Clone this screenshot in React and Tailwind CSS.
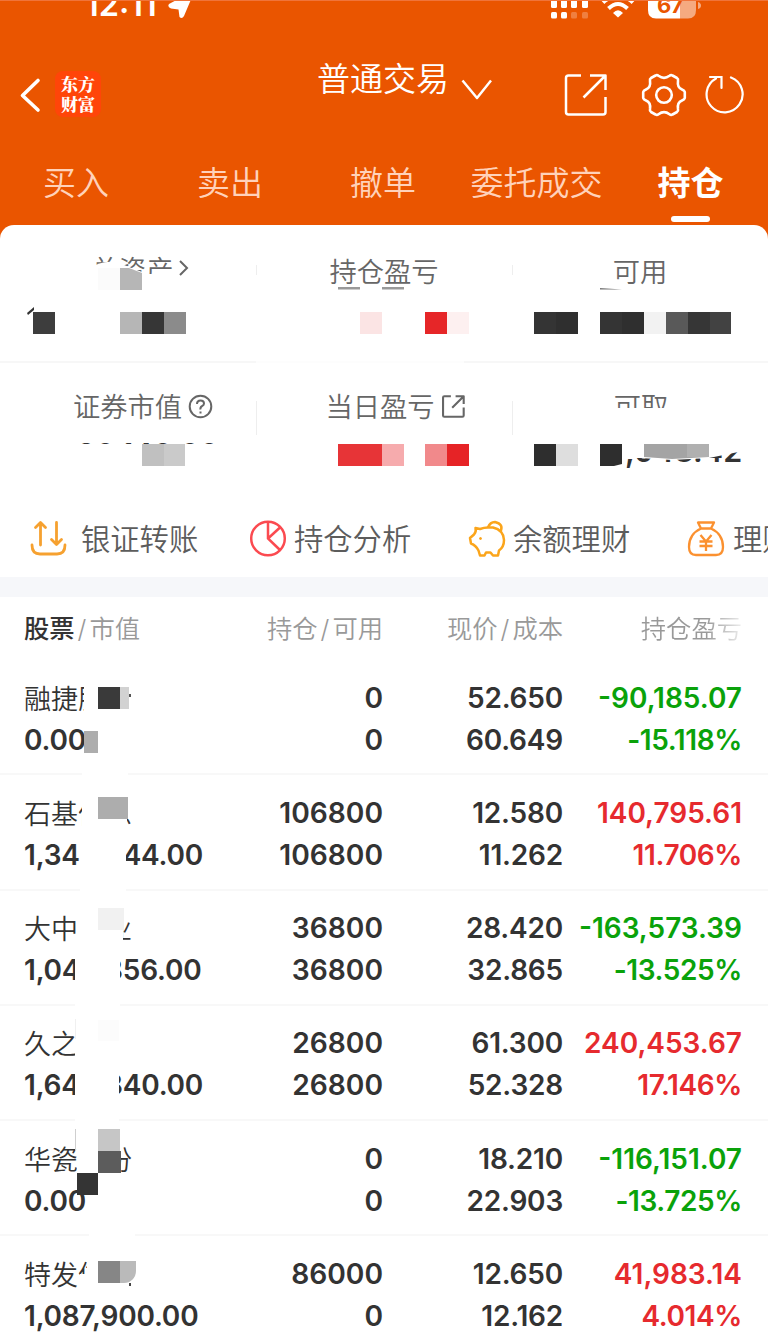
import React from "react";

const tabs = [
  { name: "买入", width: "w-[152px]" },
  { name: "卖出", width: "w-[156px]" },
  { name: "撤单", width: "w-[150px]" },
  { name: "委托成交", width: "w-[157px]" },
  { name: "持仓", width: "w-[151px]", active: true },
];

// covers are the mosaic blocks laid over the private parts of a row
const stocks = [
  {
    name: "融捷股份",
    value: "0.00",
    held: "0",
    usable: "0",
    price: "52.650",
    cost: "60.649",
    profit: "-90,185.07",
    rate: "-15.118%",
    covers: [
      "left-[84px] top-[14px] w-[50px] h-[48px] bg-white",
      "left-[129px] top-[34px] w-[2px] h-[3px] bg-[#555]",
      "left-[98px] top-[27px] w-[22px] h-[22px] bg-[#3a3a3a]",
      "left-[120px] top-[27px] w-[9px] h-[22px] bg-[#d2d2d2]",
      "left-[84px] top-[71px] w-[14px] h-[22px] bg-[#adadad]",
      "left-[82px] top-[112px] w-[46px] h-[6px] bg-white",
    ],
  },
  {
    name: "石基信息",
    value: "1,343,544.00",
    held: "106800",
    usable: "106800",
    price: "12.580",
    cost: "11.262",
    profit: "140,795.61",
    rate: "11.706%",
    covers: [
      "left-[82px] top-[10px] w-[45px] h-[52px] bg-white",
      "left-[127px] top-[10px] w-[10px] h-[34px] bg-white",
      "left-[80px] top-[60px] w-[46px] h-[58px] bg-white",
      "left-[98px] top-[22px] w-[30px] h-[22px] bg-[#adadad]",
    ],
  },
  {
    name: "大中矿业",
    value: "1,045,856.00",
    held: "36800",
    usable: "36800",
    price: "28.420",
    cost: "32.865",
    profit: "-163,573.39",
    rate: "-13.525%",
    covers: [
      "left-[77px] top-[6px] w-[46px] h-[54px] bg-white",
      "left-[123px] top-[6px] w-[10px] h-[24px] bg-white",
      "left-[75px] top-[58px] w-[45px] h-[60px] bg-white",
      "left-[98px] top-[17px] w-[26px] h-[22px] bg-[#f1f1f1]",
    ],
  },
  {
    name: "久之",
    value: "1,642,840.00",
    held: "26800",
    usable: "26800",
    price: "61.300",
    cost: "52.328",
    profit: "240,453.67",
    rate: "17.146%",
    covers: [
      "left-[75px] top-[6px] w-[44px] h-[112px] bg-white",
      "left-[75px] top-[13px] w-px h-[20px] bg-[#f0f0f0]",
      "left-[98px] top-[14px] w-[21px] h-[21px] bg-[#fcfcfc]",
    ],
  },
  {
    name: "华瓷股份",
    value: "0.00",
    held: "0",
    usable: "0",
    price: "18.210",
    cost: "22.903",
    profit: "-116,151.07",
    rate: "-13.725%",
    covers: [
      "left-[77px] top-[8px] w-[44px] h-[48px] bg-white",
      "left-[75px] top-[8px] w-px h-[22px] bg-[#cfcfcf]",
      "left-[98px] top-[8px] w-[22px] h-[22px] bg-[#c6c6c6]",
      "left-[98px] top-[30px] w-[23px] h-[22px] bg-[#5c5c5c]",
      "left-[77px] top-[52px] w-[21px] h-[22px] bg-[#343434]",
      "left-[89px] top-[111px] w-[46px] h-[6px] bg-white",
    ],
  },
  {
    name: "特发信息",
    value: "1,087,900.00",
    held: "86000",
    usable: "0",
    price: "12.650",
    cost: "12.162",
    profit: "41,983.14",
    rate: "4.014%",
    covers: [
      "left-[87px] top-[12px] w-[50px] h-[42px] bg-white",
      "left-[80px] top-[38px] w-[10px] h-[16px] bg-white",
      "left-[129px] top-[47px] w-[2px] h-[3px] bg-[#444]",
      "left-[98px] top-[25px] w-[22px] h-[22px] bg-[#868686]",
      "left-[120px] top-[25px] w-[16px] h-[22px] rounded-br-[12px] bg-[#bababa]",
    ],
  },
];

const ShareIcon = ({ className, stroke }) => (
  <svg viewBox="0 0 44 44" className={className} fill="none" stroke="currentColor" strokeWidth={stroke} strokeLinejoin="round">
    <path d="M17 2.500H4.500Q2 2.500 2 5V39Q2 41.500 4.500 41.500H39Q41.500 41.500 41.500 39V24" />
    <path d="M26 2.500H41.500V17M41 3L19.500 24.500" />
  </svg>
);

const StatusBar = () => (
  <div className="relative h-[24px] overflow-hidden border-t border-[#f0743a]">
    <span className="absolute left-[85px] -top-[14px] text-[32.500px] leading-[36px] font-semibold">
      12:11
    </span>
    <svg className="absolute left-0 -top-px" width="768" height="24" fill="#fff">
      <path d="M195 -10L184 16Q182 19.500 179.500 17L178.500 9.500L171 8.500Q167 7 169 4Z" />
      <rect x="551" y="0" width="6" height="8" rx="1.500" />
      <rect x="561" y="-2" width="6" height="10" rx="1.500" />
      <rect x="571" y="-4" width="6" height="12" rx="1.500" />
      <rect x="582" y="-4" width="6" height="12" rx="1.500" />
      <rect x="551" y="12" width="6" height="6.500" rx="1.500" />
      <rect x="561" y="12" width="6" height="6.500" rx="1.500" />
      <rect x="571" y="12" width="6" height="6.500" rx="1.500" opacity=".25" />
      <rect x="582" y="12" width="6" height="6.500" rx="1.500" opacity=".25" />
      <path d="M613 13Q618 7.500 623 13L618 17.500Z" />
      <path d="M608.500 8.500Q618 -.5 627.500 8.500" fill="none" stroke="#fff" strokeWidth="4" />
      <path d="M603 2.500Q618 -11 633 2.500" fill="none" stroke="#fff" strokeWidth="4" />
      <path d="M656 -8H680V18.500H656Q648 18.500 648 10V-8Z" />
      <path d="M680 -8H696V10Q696 18.500 688 18.500H680Z" opacity=".5" />
      <path d="M698 2Q701 3 701 5.500T698 9Z" opacity=".5" />
    </svg>
    <span className="absolute left-[657px] -top-[9px] text-[22px] leading-[26px] font-bold tracking-[-0.5px] text-[#ea5500]">
      67
    </span>
  </div>
);

const NavBar = () => (
  <div className="flex h-[136px] items-center">
    <svg className="ml-[18px] mt-[5px] shrink-0" width="26" height="36" fill="none" stroke="#fff" strokeWidth="3.600" strokeLinecap="round" strokeLinejoin="round">
      <path d="M20 3.500L4.500 18.500L20 33" />
    </svg>
    <div className="ml-[11px] mt-[4px] h-[46px] w-[46px] shrink-0 rounded-[8px] bg-[#ff4509] pt-[3px] text-center font-['Noto_Serif_CJK_SC','Noto_Sans_CJK_SC',serif] text-[17px] leading-[19.500px] font-black">
      东方
      <br />
      财富
    </div>
    <h1 className="-mt-[26px] ml-[216px] w-[132px] whitespace-nowrap text-[33px] leading-[40px] font-[350]">
      普通交易
    </h1>
    <svg className="-mt-[4px] ml-[12px] shrink-0" width="32" height="22" fill="none" stroke="#fff" strokeWidth="2.500" strokeLinejoin="round">
      <path d="M1.500 1.500L16 19L30 1.500" />
    </svg>
    <ShareIcon className="ml-[71px] mt-[6px] h-[44px] w-[44px] shrink-0" stroke={2.5} />
    <svg className="ml-[33px] mt-[5px] shrink-0" width="46" height="46" viewBox="0 0 46 46" fill="none" stroke="#fff" strokeWidth="2.600" strokeLinejoin="round">
      <path d="M14.500 3.500Q16 2.500 17.500 3.800Q23 8 28.500 3.800Q30 2.500 31.500 3.500L36 6Q37.500 7 37 9Q36 15.500 41 17.500Q43.500 18.500 43.800 20V26Q43.500 27.500 41 28.500Q36 30.500 37 37Q37.500 39 36 40L31.500 42.500Q30 43.500 28.500 42.200Q23 38 17.500 42.200Q16 43.500 14.500 42.500L10 40Q8.500 39 9 37Q10 30.500 5 28.500Q2.500 27.500 2.200 26V20Q2.500 18.500 5 17.500Q10 15.500 9 9Q8.500 7 10 6Z" />
      <circle cx="23" cy="23" r="7.800" />
    </svg>
    <svg className="ml-[18px] mt-[4px] shrink-0" width="42" height="42" fill="none" stroke="#fff" strokeWidth="2.200" strokeLinecap="round">
      <path d="M26 4.500A18 18 0 1 1 11 5.500M5 4H16.500V15" />
    </svg>
  </div>
);

const Tabs = () => (
  <div className="flex h-[65px] pt-px">
    {tabs.map((tab) => (
      <div
        key={tab.name}
        className={`${tab.width} flex shrink-0 flex-col items-center whitespace-nowrap text-[33px] leading-[44px] ${
          tab.active ? "font-bold text-white" : "font-[350] text-[#ffd2ba]"
        }`}
      >
        {tab.name}
        {tab.active && <i className="mt-[11px] h-[6px] w-[39px] rounded-full bg-white" />}
      </div>
    ))}
  </div>
);

const Summary = () => (
  <div className="text-[27.300px] leading-[36px] font-[350] text-[#666]">
    <div className="relative grid h-[138px] grid-cols-3 border-b-2 border-[#f7f7f7] pt-[30px]">
      <div className="-mt-[2px] flex h-[30px] justify-center gap-[5px] overflow-hidden pl-[26px]">
        <span className="h-[21px] overflow-hidden">总资产</span>
        <svg className="mt-[6px]" width="12" height="18" fill="none" stroke="#666" strokeWidth="2">
          <path d="M2 2L9 9L2 16" />
        </svg>
      </div>
      <div className="text-center">持仓盈亏</div>
      <div className="text-center">可用</div>
      <i className="absolute left-[256px] top-[40px] h-[10px] w-px bg-[#eee]" />
      <i className="absolute left-[512px] top-[40px] h-[10px] w-px bg-[#eee]" />
      {/* Redacted labels and amounts */}
      <svg className="absolute left-0 top-0" width="768" height="138">
        <path d="M88 44Q104 34 119 38L142 47Q143 50 143 50V72H88Z" fill="#fff" />
        <path d="M98 43H120V65H98Z" fill="#fbfbfb" />
        <path d="M120 43H129L142 48V65H120Z" fill="#b6b6b6" />
        <path d="M27 88L34 82V85L28 90Z" fill="#333" />
        <path d="M33 87H55V109H33Z" fill="#3d3d3d" />
        <path d="M120 87H142V109H120Z" fill="#b6b6b6" />
        <path d="M142 87H164V109H142Z" fill="#363636" />
        <path d="M164 87H186V109H164Z" fill="#8b8b8b" />
        <path d="M338 62H360V64.500H338ZM382 62H404V64.500H382Z" fill="#999" />
        <path d="M360 87H382V109H360Z" fill="#fbe4e4" />
        <path d="M425 87H447V109H425Z" fill="#e62628" />
        <path d="M447 87H469V109H447Z" fill="#fdf0f0" />
        <path d="M600 63L622 64.500H600Z" fill="#777" />
        <path d="M534 87H556V109H534ZM600 87H622V109H600Z" fill="#343434" />
        <path d="M556 87H578V109H556ZM622 87H644V109H622Z" fill="#2f2f2f" />
        <path d="M644 87H666V109H644Z" fill="#f2f2f2" />
        <path d="M666 87H688V109H666Z" fill="#595959" />
        <path d="M688 87H710V109H688Z" fill="#363636" />
        <path d="M710 87H731V109H710Z" fill="#424242" />
      </svg>
      <i className="absolute left-[256px] -bottom-[2px] h-[2px] w-[208px] bg-[#fdfdfd]" />
    </div>

    <div className="relative grid h-[132px] grid-cols-3 pt-[27px]">
      <div className="flex justify-center gap-[6px] pl-[30px]">
        <span>证券市值</span>
        <svg className="mt-[4px]" width="25" height="25" fill="none" stroke="#666" strokeWidth="2">
          <circle cx="12.500" cy="12.500" r="10.800" />
          <path d="M9 10Q9 6.500 12.500 6.500T16 9.500Q16 11 14 12.200T12.500 15.500M12.500 17.500V19.500" />
        </svg>
      </div>
      <div className="flex justify-center gap-[7px] pl-[22px]">
        <span>当日盈亏</span>
        <ShareIcon className="mt-[5px] h-[23px] w-[23px]" stroke={4} />
      </div>
      <div className="h-[18px] overflow-hidden pl-[2px] text-center">可取</div>
      <i className="absolute left-[256px] top-[38px] h-[34px] w-px bg-[#eee]" />
      <i className="absolute left-[512px] top-[38px] h-[34px] w-px bg-[#eee]" />
      <div className="absolute left-[77px] top-[76px] h-[5px] overflow-hidden">
        <div className="-mt-[3px] text-[29.500px] leading-[36px] font-semibold text-[#333]">20,140.00</div>
      </div>
      <div className="absolute left-[625px] top-[83px] h-[26px] overflow-hidden">
        <div className="-mt-[12px] text-[30.500px] leading-[34px] font-semibold text-[#333]">,948.42</div>
      </div>
      <svg className="absolute left-0 top-0" width="768" height="132">
        <path d="M622 79H748V87L709 95L672 97L640 95H622Z" fill="#fff" />
        <path d="M142 81H164V103H142Z" fill="#c0c0c0" />
        <path d="M164 81H185V103H164Z" fill="#cacaca" />
        <path d="M338 81H382V103H338Z" fill="#e73437" />
        <path d="M382 81H404V103H382Z" fill="#f6abad" />
        <path d="M425 81H447V103H425Z" fill="#f1898b" />
        <path d="M447 81H469V103H447Z" fill="#e62326" />
        <path d="M534 81H556V103H534ZM600 81H622V101L614 103H600Z" fill="#2e2e2e" />
        <path d="M556 81H578V103H556Z" fill="#dedede" />
        <path d="M644 81H709V94L672 96L644 94Z" fill="#a4a4a4" />
        <path d="M687 81H709V94H687Z" fill="#b0b0b0" />
      </svg>
    </div>
  </div>
);

const Shortcuts = () => (
  <div className="flex h-[82px] items-center overflow-hidden whitespace-nowrap pl-[29px] pt-[5px] text-[29.300px] font-[350] text-[#5c5c5c]">
    <div className="flex w-[220px] shrink-0 items-center gap-[14px]">
      <svg width="38" height="38" fill="none" stroke="#f6a130" strokeWidth="2.800" strokeLinecap="round" strokeLinejoin="round">
        <path d="M11.500 25V3M6.500 7.500L11.500 2.500L16.500 7.500M27.500 2.500V24M22.500 19.500L27.500 24.500L32.500 19.500M3 25Q3 34 11 34H28Q36 34 36 25" />
      </svg>
      <span className="pt-[2px]">银证转账</span>
    </div>
    <div className="flex w-[219px] shrink-0 items-center gap-[7px]">
      <svg width="38" height="38" fill="none" stroke="#fb4a50" strokeWidth="2.500">
        <circle cx="19" cy="18.500" r="16.800" />
        <path d="M19 2V18.500L31 30M19 18.500L31 7.500" />
      </svg>
      <span className="pt-[2px]">持仓分析</span>
    </div>
    <div className="flex w-[219px] shrink-0 items-center gap-[7px]">
      <svg width="38" height="38" fill="none" stroke="#fba51b" strokeWidth="2.500" strokeLinejoin="round">
        <path d="M7.500 8L12 9Q16 7.500 20 7.500H25Q35.500 10 36 20Q36 27 31 30.500L30 35.500H25L22.500 32.500H18L16.500 35.500H12L10.500 30.500Q8 25.500 3 23.500L2 18L6 14.500Q8.500 11.500 7.500 8Z" />
        <path d="M20 7.500Q22 2 27 2Q36 4 32.500 11.500" />
        <circle cx="12.500" cy="18.500" r="1" fill="#fba51b" strokeWidth="1" />
      </svg>
      <span className="pt-[2px]">余额理财</span>
    </div>
    <div className="flex shrink-0 items-center gap-[8px]">
      <svg width="38" height="38" fill="none" stroke="#fb9130" strokeWidth="2.300" strokeLinejoin="round">
        <path d="M11 2.500H27L24 8.500H14ZM14 8.500Q2 14 2 27Q2 35 9 35H29Q36 35 36 27Q36 14 24 8.500" />
        <path d="M13.500 15L19 21.500L24.500 15M12.500 21.500H25.500M12.500 26H25.500M19 21.500V31" />
      </svg>
      <span className="pt-[2px]">理财</span>
    </div>
  </div>
);

const StockRow = ({ stock }) => (
  <div className="relative grid h-[115.300px] grid-cols-[200px_159px_180px_179px] border-b-2 border-[#f8f8f8] pl-6 pt-[16.500px] text-[28px] leading-[42px] font-semibold text-[#333]">
    <div className="whitespace-nowrap">
      <div className="-mb-[2px] pt-[2px] text-[27px] font-[350]">{stock.name}</div>
      <div className="tracking-[-0.2px]">{stock.value}</div>
    </div>
    <div className="text-right text-[28.200px]">
      <div>{stock.held}</div>
      <div>{stock.usable}</div>
    </div>
    <div className="text-right tracking-[-0.2px]">
      <div>{stock.price}</div>
      <div>{stock.cost}</div>
    </div>
    <div className={`text-right ${stock.profit.startsWith("-") ? "text-[#0aa20a]" : "text-[#e62a2e]"}`}>
      <div>{stock.profit}</div>
      <div className="tracking-[-0.4px]">{stock.rate}</div>
    </div>
    {stock.covers.map((cover) => (
      <i key={cover} className={`absolute ${cover}`} />
    ))}
  </div>
);

const App = () => {
  return (
    <div className="h-[1339px] w-[768px] overflow-hidden bg-[#ea5500] font-['Inter','Noto_Sans_CJK_SC',sans-serif]">
      <header className="text-white">
        <StatusBar />
        <NavBar />
        <Tabs />
      </header>

      <main className="h-[1114px] overflow-hidden rounded-t-[14px] bg-white">
        <Summary />
        <Shortcuts />
        <div className="h-5 bg-[#f6f7fa]" />

        {/* Positions */}
        <div className="grid h-[63px] grid-cols-[200px_159px_180px_179px] pl-6 pt-[10px] text-[25.300px] leading-[44px] font-[350] text-[#999]">
          <div>
            <span className="font-medium text-[#333]">股票</span>
            <span className="px-[3px]">/</span>市值
          </div>
          <div className="text-right">
            持仓<span className="px-[3px]">/</span>可用
          </div>
          <div className="text-right">
            现价<span className="px-[3px]">/</span>成本
          </div>
          <div className="bg-linear-to-r from-[#999] from-80% to-[#eee] bg-clip-text text-right text-transparent">
            持仓盈亏
          </div>
        </div>
        {stocks.map((stock) => (
          <StockRow key={stock.name} stock={stock} />
        ))}
      </main>
    </div>
  );
};

export default App;
